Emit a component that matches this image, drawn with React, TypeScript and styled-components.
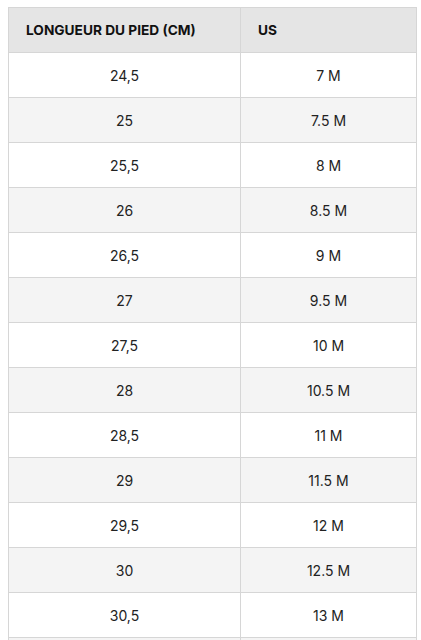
import React from 'react';
import styled, { createGlobalStyle } from 'styled-components';

const GlobalStyle = createGlobalStyle`
  body {
    margin: 0;
    background: #ffffff;
    font-family: Inter, "Noto Sans", sans-serif;
  }
`;

const Wrapper = styled.div`
  padding: 7px 5px 0 8px;
`;

const Table = styled.table`
  width: 408px;
  border-collapse: collapse;
  table-layout: fixed;
`;

const HeadCell = styled.th`
  height: 44px;
  padding: 0 0 0 17px;
  background-color: #e5e5e5;
  border: 1px solid #d6d6d6;
  text-align: left;
  font-size: 13.7px;
  font-weight: 700;
  color: #111111;
`;

const Row = styled.tr<{ $striped: boolean }>`
  background-color: ${(p) => (p.$striped ? '#f4f4f4' : '#ffffff')};
`;

const Cell = styled.td`
  height: 44px;
  padding: 0;
  border: 1px solid #d6d6d6;
  text-align: center;
  font-size: 14px;
  color: #222222;
`;

const sizes = [
  ['24,5', '7 M'],
  ['25', '7.5 M'],
  ['25,5', '8 M'],
  ['26', '8.5 M'],
  ['26,5', '9 M'],
  ['27', '9.5 M'],
  ['27,5', '10 M'],
  ['28', '10.5 M'],
  ['28,5', '11 M'],
  ['29', '11.5 M'],
  ['29,5', '12 M'],
  ['30', '12.5 M'],
  ['30,5', '13 M'],
  ['31', '13.5 M'],
];

const App = () => {
  return (
    <Wrapper>
      <GlobalStyle />
      <Table>
        <colgroup>
          <col style={{ width: 232 }} />
          <col style={{ width: 176 }} />
        </colgroup>
        <thead>
          <tr>
            <HeadCell>LONGUEUR DU PIED (CM)</HeadCell>
            <HeadCell>US</HeadCell>
          </tr>
        </thead>
        <tbody>
          {sizes.map(([cm, us], i) => (
            <Row key={cm} $striped={i % 2 === 1}>
              <Cell>{cm}</Cell>
              <Cell>{us}</Cell>
            </Row>
          ))}
        </tbody>
      </Table>
    </Wrapper>
  );
};

export default App;
